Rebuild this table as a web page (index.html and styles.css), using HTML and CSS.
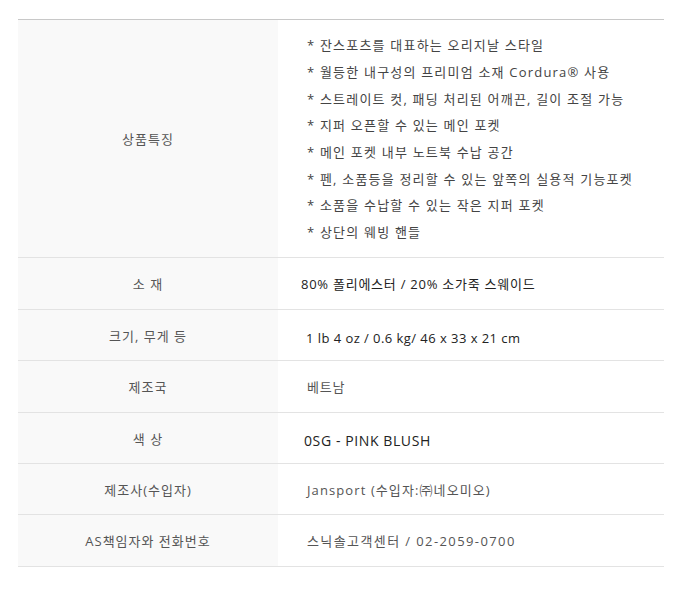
FILE: index.html
```html
<!DOCTYPE html>
<html lang="ko">
<head>
<meta charset="utf-8">
<link rel="stylesheet" href="styles.css">
</head>
<body>
<table class="spec">
  <tr class="row-features">
    <th>상품특징</th>
    <td>
      <ul class="features">
        <li>* 잔스포츠를 대표하는 오리지날 스타일</li>
        <li>* 월등한 내구성의 프리미엄 소재 Cordura® 사용</li>
        <li>* 스트레이트 컷, 패딩 처리된 어깨끈, 길이 조절 가능</li>
        <li>* 지퍼 오픈할 수 있는 메인 포켓</li>
        <li>* 메인 포켓 내부 노트북 수납 공간</li>
        <li>* 펜, 소품등을 정리할 수 있는 앞쪽의 실용적 기능포켓</li>
        <li>* 소품을 수납할 수 있는 작은 지퍼 포켓</li>
        <li>* 상단의 웨빙 핸들</li>
      </ul>
    </td>
  </tr>
  <tr class="tall">
    <th>소 재</th>
    <td class="dark tight">80% 폴리에스터 / 20% 소가죽 스웨이드</td>
  </tr>
  <tr>
    <th>크기, 무게 등</th>
    <td class="dark lower">1 lb 4 oz / 0.6 kg/ 46 x 33 x 21 cm</td>
  </tr>
  <tr class="tall">
    <th>제조국</th>
    <td>베트남</td>
  </tr>
  <tr>
    <th>색 상</th>
    <td class="dark big">0SG - PINK BLUSH</td>
  </tr>
  <tr>
    <th>제조사(수입자)</th>
    <td class="wide">Jansport (수입자:㈜네오미오)</td>
  </tr>
  <tr class="tall">
    <th>AS책임자와 전화번호</th>
    <td class="wide phone">스닉솔고객센터 / 02-2059-0700</td>
  </tr>
</table>
</body>
</html>
```

FILE: styles.css
```css
html, body {
  margin: 0;
  padding: 0;
  background: #ffffff;
}

body {
  padding: 19px 0 0 18px;
  font-family: "Open Sans", "Noto Sans CJK KR", sans-serif;
  font-size: 13px;
  color: #555555;
}

.spec {
  width: 646px;
  border-collapse: collapse;
  border-top: 1px solid #c8c8c8;
}

.spec tr {
  height: 51px;
  border-bottom: 1px solid #e3e3e3;
}

.spec tr.tall {
  height: 52px;
}

.spec th {
  width: 260px;
  background: #f9f9f9;
  font-weight: normal;
  text-align: center;
  vertical-align: middle;
  padding: 0;
  color: #555555;
  letter-spacing: 1px;
}

.spec td {
  text-align: left;
  vertical-align: middle;
  padding: 0 0 0 29px;
  color: #555555;
  letter-spacing: 0.8px;
}

.spec tr.row-features {
  height: 238px;
}

.features {
  list-style: none;
  margin: 0;
  padding: 12px 0 11px 0;
}

.features li {
  line-height: 26.7px;
  height: 26.7px;
  color: #444444;
  letter-spacing: 1.2px;
  white-space: nowrap;
}

.spec td.dark {
  color: #222222;
}

.spec td.tight {
  padding-left: 23px;
  letter-spacing: 0.75px;
}

.spec td.lower {
  padding-top: 5px;
  padding-left: 28px;
  letter-spacing: 0.45px;
}

.spec td.big {
  font-size: 14px;
  padding-left: 26px;
  padding-top: 4px;
  letter-spacing: 0.6px;
}

.spec td.wide {
  letter-spacing: 1.1px;
  color: #555555;
}

.spec td.phone {
  letter-spacing: 1.4px;
}
```
